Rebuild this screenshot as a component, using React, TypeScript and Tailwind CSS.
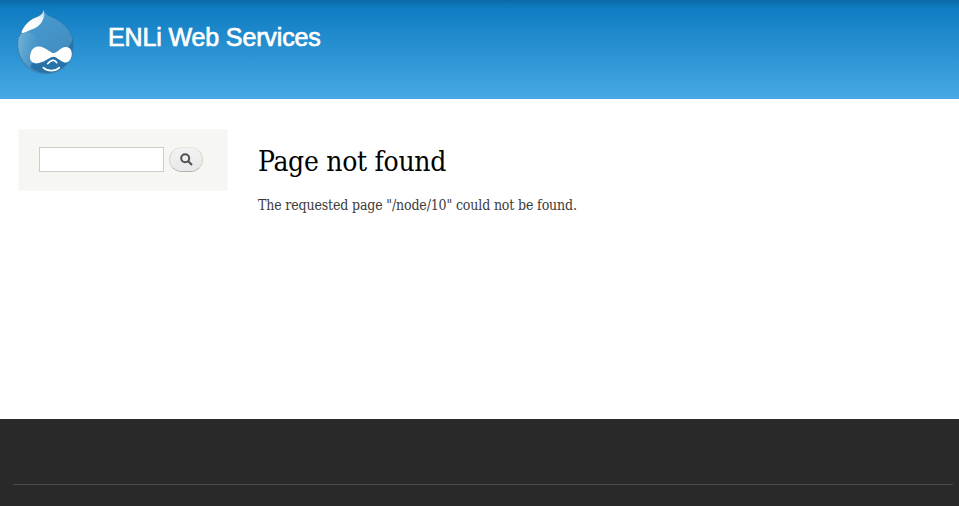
function DropletLogo() {
  return (
    <svg className="h-[76px] w-[72px] shrink-0" viewBox="0 0 216 228" aria-label="Home">
      <defs>
        <linearGradient id="body" x1="0" y1="0" x2="0.6" y2="1">
          <stop offset="0" stopColor="#4b9fd2" />
          <stop offset="0.5" stopColor="#4594c9" />
          <stop offset="1" stopColor="#438bbd" />
        </linearGradient>
        <linearGradient id="shine" x1="0.8" y1="0" x2="0.2" y2="1">
          <stop offset="0" stopColor="#b9dcf0" />
          <stop offset="0.3" stopColor="#eef7fc" />
          <stop offset="0.6" stopColor="#ffffff" />
        </linearGradient>
        <linearGradient id="cheek" x1="0" y1="0" x2="1" y2="0.2">
          <stop offset="0" stopColor="#82badc" stopOpacity="0.8" />
          <stop offset="1" stopColor="#5ba4d1" stopOpacity="0" />
        </linearGradient>
      </defs>
      <path d="M101 15C104 30 117 36 132 42C145 48 157 57 167 68C182 84 191 103 191 125C191 174 155 209 107 209C58 209 23 172 23 125C23 93 38 66 63 47C80 35 97 36 101 15Z" fill="url(#body)" stroke="#33739f" strokeWidth="1.5" />
      <path d="M188 101C184 132 159 142 133 146C94 152 66 166 61 189C74 201 92 207 109 207C154 207 188 173 189 128C189 118 189 108 188 101Z" fill="#2773a8" />
      <path d="M26 102C37 81 63 82 75 94C95 114 95 146 70 179L61 190C31 170 21 136 26 102Z" fill="url(#cheek)" />
      <path d="M101 18C98 38 78 38 62 49C50 58 38 73 35 84C36 91 47 83 71 74C91 65 100 50 103 32Z" fill="url(#shine)" />
      <path d="M63 145C68 128 86 124 101 131C113 136 123 147 131 147C143 147 151 130 167 129C181 128 189 143 184 159C180 173 169 180 158 173C147 168 140 158 131 158C121 158 110 169 96 174C79 181 67 179 62 169C58 162 60 153 63 145Z" fill="white" />
      <path d="M113 179C121 169 134 164 140 176" fill="none" stroke="white" strokeWidth="5" strokeLinecap="round" />
      <path d="M100 191C113 203 135 203 148 191" fill="none" stroke="white" strokeWidth="5" strokeLinecap="round" />
    </svg>
  );
}

export default function App() {
  return (
    <div className="flex h-[506px] w-[959px] flex-col overflow-hidden bg-white">
      <header className="flex h-[99px] shrink-0 items-start bg-[linear-gradient(to_bottom,#0a67a4_0px,#0b74b6_4px,#0f7dc2_9px,#48a9e4_99px)] pt-1 pl-[10px]">
        <DropletLogo />
        <div className="ml-[26px] pt-[17px] font-['Liberation_Sans',Arial,sans-serif] text-[25px] leading-8 tracking-[-0.13px] text-white [-webkit-text-stroke:0.7px_white]">
          ENLi Web Services
        </div>
      </header>
      <main className="flex h-80 shrink-0 items-start pt-[30px] pl-[18px]">
        <aside className="h-[62px] w-[210px] border border-[#f9f9f9] bg-[#f6f6f2] pt-[17px] pl-5">
          <form className="flex items-center gap-[5px]" onSubmit={(e) => e.preventDefault()}>
            <input type="text" aria-label="Search" className="h-[25px] w-[125px] border border-[#cccccc] bg-white px-1 text-sm outline-none" />
            <button type="submit" aria-label="Search" className="flex h-[25px] w-[34px] items-center justify-center rounded-full border border-[#d2d2d2] border-t-[#e4e4e4] border-b-[#b4b4b4] bg-linear-to-b from-[#f3f3f3] to-[#e8e8e8]">
              <svg className="size-[13px]" viewBox="0 0 13 13" fill="none" stroke="#505050">
                <circle cx="5.2" cy="5.2" r="4" strokeWidth="2" />
                <path d="M8 8L12 12" strokeWidth="2.2" />
              </svg>
            </button>
          </form>
        </aside>
        <section className="ml-[30px] pt-[15px] font-['DejaVu_Serif_Condensed','DejaVu_Serif',serif]">
          <h1 className="h-9 text-[28px] leading-9 tracking-[-0.3px] whitespace-nowrap text-black">Page not found</h1>
          <p className="mt-[15px] text-[14px] leading-[21px] tracking-[-0.15px] whitespace-nowrap text-[#3b3b3b]">The requested page "/node/10" could not be found.</p>
        </section>
      </main>
      <footer className="flex-1 bg-[#292929] pt-[65px] pr-[6px] pl-[13px]">
        <hr className="border-t border-[#494949]" />
      </footer>
    </div>
  );
}
